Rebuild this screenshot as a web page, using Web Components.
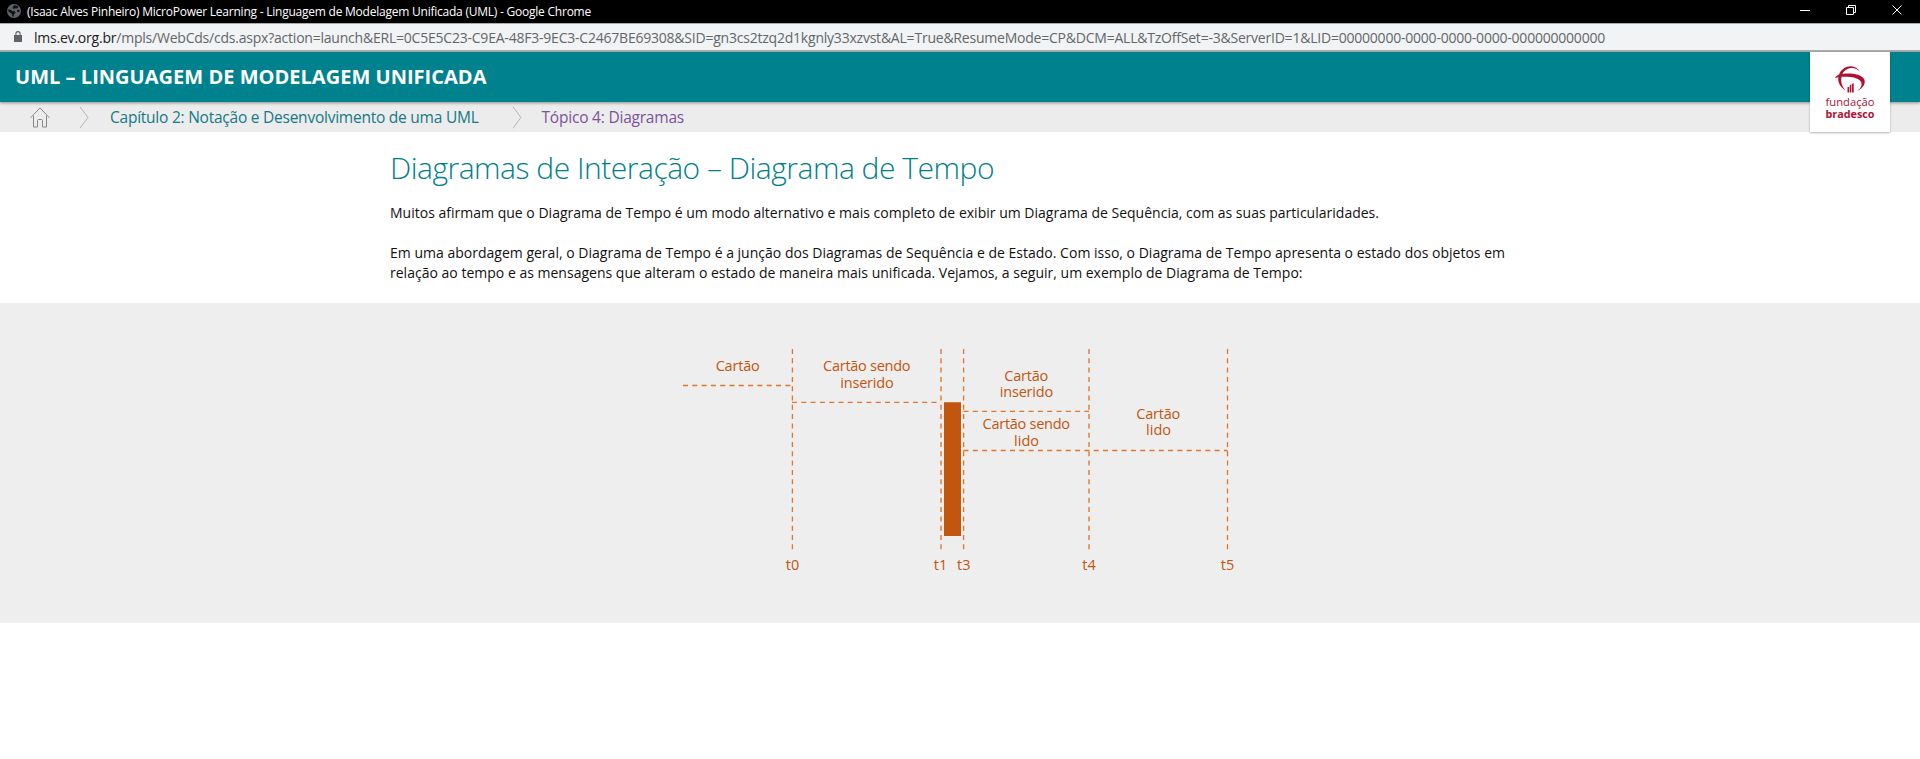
<!DOCTYPE html>
<html lang="pt-BR">
<head>
<meta charset="utf-8">
<title>UML – Linguagem de Modelagem Unificada</title>
<style>
html,body{margin:0;background:#fff;font-family:"Open Sans","Noto Sans",sans-serif;overflow:hidden}
</style>
</head>
<body>
<lms-page></lms-page>
<script>
// One line of text, tracked so that it fills the given width.
class FitLine extends HTMLElement{
  constructor(){
    super();
    this.attachShadow({mode:'open'}).innerHTML='<style>:host{display:block;white-space:nowrap}span{display:inline-block}</style><span><slot></slot></span>';
  }
  connectedCallback(){
    const s=this.shadowRoot.querySelector('span'),n=this.textContent.length;
    const w=s.getBoundingClientRect().width;
    if(w&&n)s.style.letterSpacing=((+this.getAttribute('width')-w)/n).toFixed(4)+'px';
  }
}
const define=(name,html)=>customElements.define(name,class extends HTMLElement{
  constructor(){super();this.attachShadow({mode:'open'}).innerHTML=html;}
});

define('window-bar',`<style>
:host{display:flex;height:23px;background:#000;color:#fff;font-size:12px;line-height:24px;align-items:flex-start}
.globe{margin:4px 6px 0 7px;width:14px;height:14px;flex:none}
.ctl{margin-left:auto;width:130px;height:23px;flex:none}
</style>
<svg class="globe" viewBox="0 0 14 14"><circle cx="7" cy="7" r="7" fill="#5f6368"/><path d="M1.2 5.2 4 6l1.600 1.200h2.200l.8 1.400-1.400 1.600-.6 2.400-1.200-.2-.4-2.400-2.400-1.800-1.200-.6zM7 1.200l3.800.8.6 1.400-1.600 1.200-1.800-.4-1.400.8L5.400 4zM12.400 5.400l-2.400.8.4 1.600 2 .6z" fill="#111"/></svg>
<fit-line width="564">(Isaac Alves Pinheiro) MicroPower Learning - Linguagem de Modelagem Unificada (UML) - Google Chrome</fit-line>
<svg class="ctl" viewBox="0 0 130 23" fill="none" stroke="#fff"><path d="M10 10.500h10M56.500 7.500h7v7h-7zM58.500 7.500v-2h7v7h-2M102.500 5.500l9 9M111.500 5.500l-9 9"/></svg>`);

define('address-bar',`<style>
:host{display:flex;box-sizing:border-box;height:29px;border-top:1px solid #aaa;border-bottom:2px solid #aeb0b2;background:#f1f3f4;color:#63676b;font-size:14px;line-height:27px}
svg{flex:none;width:8px;height:11px;margin:7px 12px 0 14px}
b{font-weight:400;color:#202124}
</style>
<svg viewBox="0 0 8 11"><path d="M0 4h8v7H0z" fill="#5f6368"/><path d="M1.900 4.500V2.700a2.100 2.100 0 0 1 4.200 0v1.800" fill="none" stroke="#5f6368" stroke-width="1.100"/></svg>
<fit-line width="1571"><b>lms.ev.org.br</b>/mpls/WebCds/cds.aspx?action=launch&amp;ERL=0C5E5C23-C9EA-48F3-9EC3-C2467BE69308&amp;SID=gn3cs2tzq2d1kgnly33xzvst&amp;AL=True&amp;ResumeMode=CP&amp;DCM=ALL&amp;TzOffSet=-3&amp;ServerID=1&amp;LID=00000000-0000-0000-0000-000000000000</fit-line>`);

define('course-header',`<style>
:host{display:flex;height:50px;background:#00828e;color:#fff;font-size:20px;font-weight:700;line-height:50px;padding-left:15px;box-shadow:0 1px 3px rgba(0,0,0,.4);position:relative;box-sizing:border-box}
foundation-logo{position:absolute;left:1810px;top:0}
</style><fit-line width="471.500">UML – LINGUAGEM DE MODELAGEM UNIFICADA</fit-line><foundation-logo></foundation-logo>`);

define('foundation-logo',`<style>
:host{display:block;width:80px;height:80px;background:#fff;box-shadow:0 1px 2px rgba(0,0,0,.3);font-weight:400;line-height:1}svg{display:block}
</style><svg width="80" height="80" viewBox="0 0 80 80" fill="#b01235" font-family="Open Sans,sans-serif" font-size="11">
<path d="M29 22.400c2-5 7-8.400 12-8.200 4 .2 7 2.200 8.300 4.800-3-2.700-6.400-3.500-9.500-2.700-3.600.8-6.300 3-7.400 5.600 8.800-1.100 18.600.2 21.500 4.900 2.500 4.400-.7 9.500-6.700 12.200 3.800-2.900 5.600-6.600 3.400-9.700-2.600-3.700-10.500-5-19-4.500-1.100 5.300.4 9.600 3.800 13.600-5.300-3.500-8-8.300-7-13.100l-3.500.6c1-1.800 2.300-2.700 4.100-3.500z"/>
<path d="M37.500 35h1.600v5.500h-1.600zM39.700 33.200l1.700-1v8.300h-1.700zM42 32l1.700-1v9.500H42z"/>
<text x="15.500" y="53.800" textLength="49" lengthAdjust="spacingAndGlyphs">fundação</text><text x="15.500" y="65.600" font-weight="700" textLength="49" lengthAdjust="spacingAndGlyphs">bradesco</text></svg>`);

define('crumb-bar',`<style>
:host{display:flex;height:30px;background:#ececec;font-size:15.500px;line-height:31px;color:#137a86}
svg{flex:none;display:block}
.topic{color:#7b539d}.home{margin:5px 29px 0 30px}.sep{margin-top:4px}.a{margin-right:20px}.b{margin:4px 20px 0 33px}
.a+fit-line{margin-left:1px}
</style>
<svg class="home" width="20" height="21" viewBox="0 0 20 21" fill="none" stroke="#8a8a8a"><path d="M.6 10.800 10 .9l9.400 9.900M3.500 8.500v11.500h4v-6.500q0-1 1-1h3q1 0 1 1V20h4V8.500"/></svg>
<svg class="sep a" width="10" height="23" viewBox="0 0 10 23" fill="none" stroke="#b4b4b4"><path d="M1 .8 9 11.500 1 22.200"/></svg>
<fit-line width="368.500">Capítulo 2: Notação e Desenvolvimento de uma UML</fit-line>
<svg class="sep b" width="10" height="23" viewBox="0 0 10 23" fill="none" stroke="#b4b4b4"><path d="M1 .8 9 11.500 1 22.200"/></svg>
<fit-line class="topic" width="142.500">Tópico 4: Diagramas</fit-line>`);

define('lesson-text',`<style>
:host{display:block;box-sizing:border-box;height:171px;padding:16px 0 0 390px;color:#111;font-size:14px;line-height:20px}
h1{margin:0;font-weight:300;font-size:30px;line-height:40px;color:#007f8b}
p{margin:15px 0 20px}p+p{margin:0}
</style>
<h1><fit-line width="604">Diagramas de Interação – Diagrama de Tempo</fit-line></h1>
<p><fit-line width="989">Muitos afirmam que o Diagrama de Tempo é um modo alternativo e mais completo de exibir um Diagrama de Sequência, com as suas particularidades.</fit-line></p>
<p><fit-line width="1115">Em uma abordagem geral, o Diagrama de Tempo é a junção dos Diagramas de Sequência e de Estado. Com isso, o Diagrama de Tempo apresenta o estado dos objetos em</fit-line>
<fit-line width="912.500">relação ao tempo e as mensagens que alteram o estado de maneira mais unificada. Vejamos, a seguir, um exemplo de Diagrama de Tempo:</fit-line></p>`);

define('timing-diagram',`<style>
:host{display:flex;justify-content:center;height:320px;background:#eee}svg{display:block}
</style>
<svg width="600" height="320" viewBox="660 303 600 320" fill="#c1560e" font-family="Open Sans,sans-serif" font-size="14.500" text-anchor="middle">
<g stroke="#e0762c" stroke-width="1.300" stroke-dasharray="5 4.300">
<path d="M792.400 349V551M963.600 349V551M1227.500 349V551M683 385.500H792M792 402.400H940M963.500 411.400H1089M963.500 450.500H1227.500"/><path stroke="#e99a66" stroke-width="2" d="M941 349V551M1089 349V551"/></g>
<path d="M944 402.300h17v133.700h-17z"/>
<text x="737.700" y="370.500" textLength="44">Cartão</text>
<text x="866.800" y="370.500" textLength="87.500">Cartão sendo</text><text x="867" y="387.500" textLength="53.500">inserido</text>
<text x="1026.300" y="380.500" textLength="44">Cartão</text><text x="1026.500" y="396.500" textLength="53.500">inserido</text>
<text x="1026.300" y="429.300" textLength="87.500">Cartão sendo</text><text x="1026.500" y="446" textLength="25">lido</text>
<text x="1158.300" y="419.300" textLength="44">Cartão</text><text x="1158.500" y="435.300" textLength="25">lido</text>
<text x="792.500" y="570">t0</text><text x="940.500" y="570">t1</text><text x="963.800" y="570">t3</text><text x="1089" y="570">t4</text><text x="1227.500" y="570">t5</text>
</svg>`);

define('lms-page',`<style>:host{display:block;width:1920px;height:759px;background:#fff;overflow:hidden}course-header{z-index:1}</style>
<window-bar></window-bar>
<address-bar></address-bar>
<course-header></course-header>
<crumb-bar></crumb-bar>
<lesson-text></lesson-text>
<timing-diagram></timing-diagram>`);
// Registered last so every line is already laid out when it is measured.
customElements.define('fit-line',FitLine);
</script>
</body>
</html>
